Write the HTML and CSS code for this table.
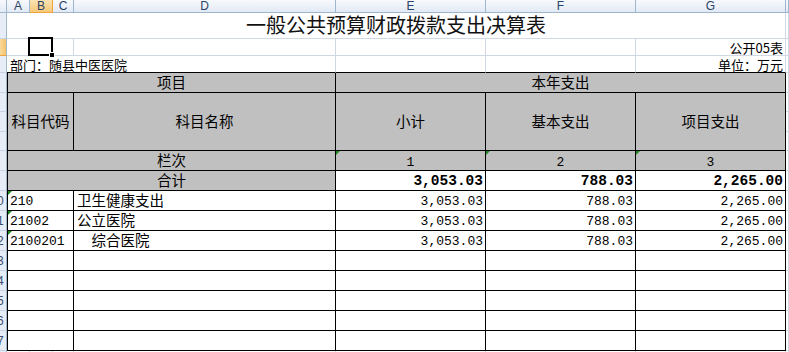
FILE: index.html
```html
<!DOCTYPE html>
<html lang="zh-CN">
<head>
<meta charset="utf-8">
<title>一般公共预算财政拨款支出决算表</title>
<link rel="stylesheet" href="styles.css">
</head>
<body>
<div class="sheet">
  <!-- column headers -->
  <div class="c ch corner"></div>
  <div class="c ch">A</div>
  <div class="c ch sel">B</div>
  <div class="c ch">C</div>
  <div class="c ch">D</div>
  <div class="c ch">E</div>
  <div class="c ch">F</div>
  <div class="c ch">G</div>
  <div class="c ch"></div>

  <!-- row 1 -->
  <div class="c rh"></div>
  <div class="c title span7">一般公共预算财政拨款支出决算表</div>
  <div class="c"></div>

  <!-- row 2 -->
  <div class="c rh sel"></div>
  <div class="c"></div>
  <div class="c active"><div class="selbox"><div class="handle"></div></div></div>
  <div class="c"></div>
  <div class="c"></div>
  <div class="c"></div>
  <div class="c"></div>
  <div class="c note">公开05表</div>
  <div class="c"></div>

  <!-- row 3 -->
  <div class="c rh"></div>
  <div class="c note-l span4 tb">部门：随县中医医院</div>
  <div class="c tb"></div>
  <div class="c tb"></div>
  <div class="c note tb">单位：万元</div>
  <div class="c"></div>

  <!-- row 4 -->
  <div class="c rh"></div>
  <div class="c t tl gray span4">项目</div>
  <div class="c t gray span3">本年支出</div>
  <div class="c"></div>

  <!-- rows 5-7 -->
  <div class="c rh"></div>
  <div class="c t tl gray span3 rspan3">科目代码</div>
  <div class="c t gray rspan3">科目名称</div>
  <div class="c t gray rspan3">小计</div>
  <div class="c t gray rspan3">基本支出</div>
  <div class="c t gray rspan3">项目支出</div>
  <div class="c"></div>
  <div class="c rh"></div>
  <div class="c"></div>
  <div class="c rh"></div>
  <div class="c"></div>

  <!-- row 8 -->
  <div class="c rh"></div>
  <div class="c t tl gray span4">栏次</div>
  <div class="c t gray idx tri">1</div>
  <div class="c t gray idx tri">2</div>
  <div class="c t gray idx tri">3</div>
  <div class="c"></div>

  <!-- row 9 -->
  <div class="c rh"></div>
  <div class="c t tl gray span4">合计</div>
  <div class="c t num b">3,053.03</div>
  <div class="c t num b">788.03</div>
  <div class="c t num b">2,265.00</div>
  <div class="c"></div>

  <!-- row 10 -->
  <div class="c rh"><span class="rn">0</span></div>
  <div class="c t tl span3 code tri">210</div>
  <div class="c t name">卫生健康支出</div>
  <div class="c t num">3,053.03</div>
  <div class="c t num">788.03</div>
  <div class="c t num">2,265.00</div>
  <div class="c"></div>

  <!-- row 11 -->
  <div class="c rh"><span class="rn">1</span></div>
  <div class="c t tl span3 code tri">21002</div>
  <div class="c t name">公立医院</div>
  <div class="c t num">3,053.03</div>
  <div class="c t num">788.03</div>
  <div class="c t num">2,265.00</div>
  <div class="c"></div>

  <!-- row 12 -->
  <div class="c rh"><span class="rn">2</span></div>
  <div class="c t tl span3 code tri">2100201</div>
  <div class="c t name">　综合医院</div>
  <div class="c t num">3,053.03</div>
  <div class="c t num">788.03</div>
  <div class="c t num">2,265.00</div>
  <div class="c"></div>

  <!-- rows 13-17 -->
  <div class="c rh"><span class="rn">3</span></div>
  <div class="c t tl span3"></div><div class="c t"></div><div class="c t"></div><div class="c t"></div><div class="c t"></div>
  <div class="c"></div>
  <div class="c rh"><span class="rn">4</span></div>
  <div class="c t tl span3"></div><div class="c t"></div><div class="c t"></div><div class="c t"></div><div class="c t"></div>
  <div class="c"></div>
  <div class="c rh"><span class="rn">5</span></div>
  <div class="c t tl span3"></div><div class="c t"></div><div class="c t"></div><div class="c t"></div><div class="c t"></div>
  <div class="c"></div>
  <div class="c rh"><span class="rn">6</span></div>
  <div class="c t tl span3"></div><div class="c t"></div><div class="c t"></div><div class="c t"></div><div class="c t"></div>
  <div class="c"></div>
  <div class="c rh"><span class="rn">7</span></div>
  <div class="c t tl span3"></div><div class="c t"></div><div class="c t"></div><div class="c t"></div><div class="c t"></div>
  <div class="c"></div>

  <!-- row 18 (partial) -->
  <div class="c rh"></div>
  <div class="c"></div><div class="c"></div><div class="c"></div><div class="c"></div>
  <div class="c"></div><div class="c"></div><div class="c"></div><div class="c"></div>
</div>
</body>
</html>
```

FILE: styles.css
```css
html, body {
  margin: 0;
  padding: 0;
  background: #ffffff;
  overflow: hidden;
}

.sheet {
  display: grid;
  grid-template-columns: 7px 23px 23px 21px 262px 150px 150px 150px 1fr;
  grid-template-rows: 13px 26px 17px 17px 20px 19px 20px 19px repeat(11, 20px);
  width: 789px;
  height: 352px;
  overflow: hidden;
  font-family: "Noto Sans CJK SC", sans-serif;
  color: #000;
}

.c {
  box-sizing: border-box;
  border-right: 1px solid #d0d7e5;
  border-bottom: 1px solid #d0d7e5;
  display: flex;
  align-items: center;
  min-width: 0;
  white-space: nowrap;
  background: #fff;
  line-height: 1;
}

.span3 { grid-column: span 3; }
.span4 { grid-column: span 4; }
.span7 { grid-column: span 7; }
.rspan3 { grid-row: span 3; }

/* column headers */
.ch {
  background: linear-gradient(#f7f9fc, #e3eaf5);
  border-right: 1px solid #9eb6ce;
  border-bottom: 1px solid #9eb6ce;
  justify-content: center;
  align-items: center;
  font-family: "Liberation Sans", sans-serif;
  font-size: 12px;
  line-height: 12px;
  color: #2a4366;
}
.ch.sel {
  background: linear-gradient(#fbe3b3, #f6c97a);
  border-right-color: #f0a43b;
  border-bottom-color: #f0a43b;
}

/* row headers */
.rh {
  overflow: hidden;
  background: #e6edf7;
  border-right: 1px solid #9eb6ce;
  border-bottom: 1px solid #c5d3e4;
  font-family: "Liberation Sans", sans-serif;
  font-size: 12px;
  color: #3a4d70;
}
.rh.sel {
  background: linear-gradient(90deg, #f9d99c, #f5c36a);
  border-bottom-color: #f0a43b;
}
.rn {
  margin-left: -3px;
}

/* title and notes */
.title {
  justify-content: center;
  font-size: 20px;
  color: #111;
  padding-bottom: 1px;
}
.note {
  justify-content: flex-end;
  padding-right: 2px;
  font-size: 13px;
}
.note-l {
  padding-left: 3px;
  font-size: 13px;
}
.tb {
  border-bottom-color: #000;
}

/* selected cell */
.active {
  position: relative;
}
.selbox {
  position: absolute;
  left: -2px;
  top: -2px;
  width: 25px;
  height: 19px;
  box-sizing: border-box;
  border: 2px solid #000;
  z-index: 3;
}
.handle {
  position: absolute;
  right: -4px;
  bottom: -4px;
  width: 6px;
  height: 6px;
  box-sizing: border-box;
  background: #000;
  border: 1px solid #fff;
}

/* table */
.t {
  border-right: 1px solid #000;
  border-bottom: 1px solid #000;
  font-size: 14.5px;
}
.tl {
  border-left: 1px solid #000;
}
.gray {
  background: #c0c0c0;
  justify-content: center;
}
.idx {
  font-family: "Liberation Mono", monospace;
  font-size: 13px;
  padding-top: 3px;
}
.num {
  justify-content: flex-end;
  padding-right: 2px;
  padding-top: 2px;
  font-family: "Liberation Mono", monospace;
  font-size: 13px;
}
.num.b {
  font-weight: bold;
  font-size: 14.5px;
}
.code {
  padding-left: 2px;
  padding-top: 2px;
  font-family: "Liberation Mono", monospace;
  font-size: 13px;
}
.name {
  padding-left: 3px;
}
.tri {
  position: relative;
}
.tri::before {
  content: "";
  position: absolute;
  left: 0;
  top: 0;
  border-top: 4px solid #1c8a1c;
  border-right: 4px solid transparent;
}
```
